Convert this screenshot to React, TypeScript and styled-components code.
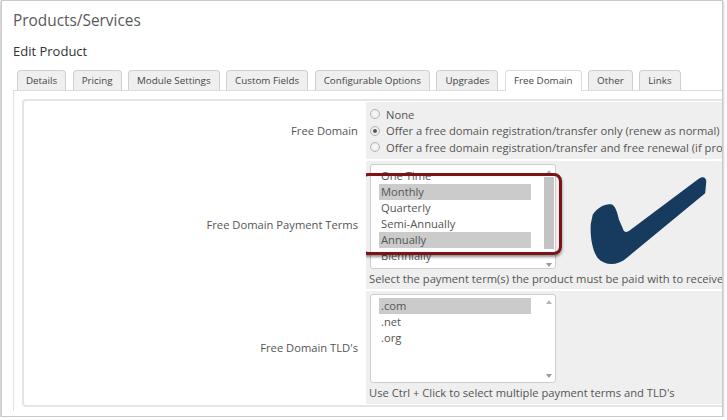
import styled, { createGlobalStyle } from 'styled-components'

const GlobalStyle = createGlobalStyle`
  html, body {
    margin: 0;
    padding: 0;
    background: #fff;
  }
  body {
    font-family: 'Open Sans', 'Liberation Sans', sans-serif;
  }
`

const Frame = styled.div`
  box-sizing: border-box;
  margin-left: 1px;
  width: 722px;
  height: 417px;
  border: 1px solid #c9c9c9;
  box-shadow: 0 1px 2px rgba(0, 0, 0, 0.45);
  padding: 0 0 0 11px;
  overflow: hidden;
  display: flex;
  flex-direction: column;
`

const Title = styled.h1`
  margin: 10px 0 0 0;
  font-size: 15.4px;
  line-height: 20px;
  font-weight: 400;
  color: #5a5a5a;
`

const SubTitle = styled.h2`
  margin: 11px 0 0 0;
  font-size: 13px;
  line-height: 18px;
  font-weight: 400;
  color: #333;
`

const TabBar = styled.div`
  display: flex;
  gap: 6.5px;
  margin-top: 10px;
  padding-left: 4px;
  border-bottom: 1px solid #dcdcdc;
  width: 706px;
`

const Tab = styled.div<{ $active?: boolean }>`
  height: 19px;
  line-height: 19px;
  padding: 0 8px;
  font-size: 9.8px;
  color: #444;
  background: ${(p) => (p.$active ? '#fff' : '#efefef')};
  border: 1px solid ${(p) => (p.$active ? '#dcdcdc' : '#cfcfcf')};
  border-bottom: none;
  border-radius: 4px 4px 0 0;
  margin-bottom: ${(p) => (p.$active ? '-1px' : '0')};
  padding-bottom: ${(p) => (p.$active ? '1px' : '0')};
  white-space: nowrap;
`

const Panel = styled.div`
  flex: 1;
  border-left: 1px solid #e2e2e2;
  padding: 8px 0 0 8px;
  margin-bottom: 5px;
`

const FormBox = styled.div`
  width: 720px;
  border: 2px solid #e0e6e9;
  border-radius: 4px;
  display: grid;
  grid-template-columns: 340px 1fr;
  column-gap: 2px;
  row-gap: 2px;
  padding-top: 1px;
  padding-bottom: 1px;
`

const Label = styled.div`
  display: flex;
  align-items: center;
  justify-content: flex-end;
  padding-right: 6px;
  font-size: 11.2px;
  color: #555;
  white-space: nowrap;
`

const Field = styled.div<{ $pad?: string }>`
  position: relative;
  background: #efefef;
  padding: ${(p) => p.$pad ?? '3px 0 3px 3px'};
  font-size: 11.2px;
  color: #555;
  white-space: nowrap;
  overflow: hidden;
`

const RadioRow = styled.label`
  display: flex;
  align-items: center;
  gap: 6px;
  height: 16.5px;
  padding-left: 1px;
`

const Radio = styled.span<{ $checked?: boolean }>`
  box-sizing: border-box;
  flex-shrink: 0;
  width: 10px;
  height: 10px;
  border-radius: 50%;
  border: 1px solid #b4b4b4;
  background: radial-gradient(circle, #fafafa 0%, #e6e6e6 100%);
  display: flex;
  align-items: center;
  justify-content: center;
  &::after {
    content: '';
    width: 4px;
    height: 4px;
    border-radius: 50%;
    background: ${(p) => (p.$checked ? '#555' : 'transparent')};
  }
`

const ListWrap = styled.div`
  position: relative;
  width: 186px;
  margin-left: 1px;
`

const ListBox = styled.div<{ $height: number }>`
  box-sizing: border-box;
  height: ${(p) => p.$height}px;
  background: #fff;
  border: 1px solid #cdcdcd;
  border-radius: 3px;
  display: flex;
  overflow: hidden;
`

const Options = styled.div`
  flex: 1;
  padding: 3px 0 0 8px;
  overflow: hidden;
`

const Option = styled.div<{ $selected?: boolean }>`
  width: 150px;
  height: 16px;
  line-height: 16px;
  padding-left: 2px;
  background: ${(p) => (p.$selected ? '#cbcbcb' : 'transparent')};
  color: #555;
`

const ScrollBar = styled.div`
  width: 13px;
  display: flex;
  flex-direction: column;
  align-items: center;
  padding: 3px 0 2px;
`

const Arrow = styled.div<{ $down?: boolean }>`
  width: 0;
  height: 0;
  border-left: 3px solid transparent;
  border-right: 3px solid transparent;
  ${(p) =>
    p.$down ? 'border-top: 4px solid #9a9a9a;' : 'border-bottom: 4px solid #b5b5b5;'}
  margin: 2px 0;
`

const Track = styled.div`
  flex: 1;
  width: 10px;
  padding: 1px 0 12px;
  display: flex;
  flex-direction: column;
`

const Thumb = styled.div<{ $size: number }>`
  height: ${(p) => p.$size}px;
  background: #c3c3c3;
`

const Help = styled.div`
  height: 16px;
  line-height: 16px;
  padding-top: 2px;
`

const Highlight = styled.div`
  position: absolute;
  left: -10px;
  top: 9px;
  width: 202px;
  height: 82px;
  box-sizing: border-box;
  border: 3px solid #7c1417;
  border-radius: 8px;
  box-shadow: 0 2px 3px rgba(0, 0, 0, 0.45), inset 0 0 1px rgba(0, 0, 0, 0.3);
  pointer-events: none;
`

const Check = styled.svg`
  position: absolute;
  left: 220px;
  top: 10px;
  width: 124px;
  height: 97px;
`

const terms = ['One Time', 'Monthly', 'Quarterly', 'Semi-Annually', 'Annually', 'Biennially', 'Triennially']
const selectedTerms = ['Monthly', 'Annually']
const tlds = ['.com', '.net', '.org']
const tabs = [
  'Details',
  'Pricing',
  'Module Settings',
  'Custom Fields',
  'Configurable Options',
  'Upgrades',
  'Free Domain',
  'Other',
  'Links',
]

export default function App() {
  return (
    <>
      <GlobalStyle />
      <Frame>
        <Title>Products/Services</Title>
        <SubTitle>Edit Product</SubTitle>
        <TabBar>
          {tabs.map((t) => (
            <Tab key={t} $active={t === 'Free Domain'}>
              {t}
            </Tab>
          ))}
        </TabBar>
        <Panel>
          <FormBox>
            <Label>Free Domain</Label>
            <Field $pad="4px 0 3px 3px">
              <RadioRow>
                <Radio />
                None
              </RadioRow>
              <RadioRow>
                <Radio $checked />
                Offer a free domain registration/transfer only (renew as normal)
              </RadioRow>
              <RadioRow>
                <Radio />
                Offer a free domain registration/transfer and free renewal (if product is renewed on same terms)
              </RadioRow>
            </Field>

            <Label>Free Domain Payment Terms</Label>
            <Field $pad="3px 0 2px 3px">
              <ListWrap>
                <ListBox $height={105}>
                  <Options>
                    {terms.map((t) => (
                      <Option key={t} $selected={selectedTerms.includes(t)}>
                        {t}
                      </Option>
                    ))}
                  </Options>
                  <ScrollBar>
                    <Arrow />
                    <Track>
                      <Thumb $size={72} />
                    </Track>
                    <Arrow $down />
                  </ScrollBar>
                </ListBox>
                <Highlight />
              </ListWrap>
              <Help>Select the payment term(s) the product must be paid with to receive the free domain</Help>
              <Check viewBox="0 0 128 96" preserveAspectRatio="none">
                <path
                  d="M7,43 C12,36 20,32 26,33 C30,34 32,40 34,48 L38,57 C39,61 42,61 45,59 L116,8 C121,4 125,7 124,12 L123,22 L42,86 C32,94 20,94 12,86 C6,78 4,62 5,52 Z"
                  fill="#173b5e"
                />
              </Check>
            </Field>

            <Label>Free Domain TLD's</Label>
            <Field $pad="3px 0 3px 3px">
              <ListWrap>
                <ListBox $height={89}>
                  <Options>
                    {tlds.map((t) => (
                      <Option key={t} $selected={t === '.com'}>
                        {t}
                      </Option>
                    ))}
                  </Options>
                  <ScrollBar>
                    <Arrow />
                    <Track />
                    <Arrow $down />
                  </ScrollBar>
                </ListBox>
              </ListWrap>
              <Help>Use Ctrl + Click to select multiple payment terms and TLD's</Help>
            </Field>
          </FormBox>
        </Panel>
      </Frame>
    </>
  )
}
